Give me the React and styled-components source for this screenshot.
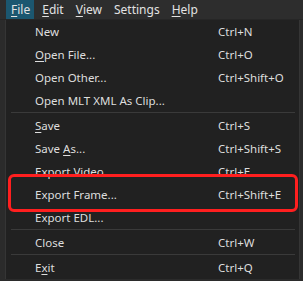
import React from 'react'
import styled, { createGlobalStyle } from 'styled-components'

const GlobalStyle = createGlobalStyle`
  html, body {
    margin: 0;
    padding: 0;
    background: #2b2b2b;
    overflow: hidden;
  }
  body {
    font-family: "Noto Sans", "Open Sans", sans-serif;
    font-size: 11.5px;
    color: #dedede;
  }
`

const Window = styled.div`
  width: 303px;
  height: 281px;
  background: #2b2b2b;
  overflow: hidden;
`

const MenuBar = styled.div`
  display: flex;
  gap: 3px;
  height: 20px;
  padding-left: 6px;
  background: #2d2d2d;
  border-bottom: 1px solid #262626;
  box-sizing: border-box;
  font-size: 12px;
`

const BarItem = styled.div`
  display: flex;
  align-items: center;
  padding: 0 4px 0 5px;
  background: ${(p) => (p.$active ? '#1b5770' : 'transparent')};
  color: #e2e2e2;
`

const Mnemonic = styled.span`
  text-decoration: underline;
  text-underline-offset: 2px;
`

const Dropdown = styled.div`
  margin-left: 5px;
  width: 295px;
  background: #212121;
  border-left: 1px solid #353535;
  border-right: 1px solid #353535;
  box-sizing: border-box;
`

const Row = styled.div`
  position: relative;
  display: grid;
  grid-template-columns: 183px 1fr;
  align-items: center;
  height: 23px;
  padding-left: 29px;
`

const Shortcut = styled.span`
  white-space: nowrap;
`

const Separator = styled.div`
  height: 1px;
  margin: 0 4px 1px 5px;
  background: #3a3a3a;
`

const Highlight = styled.div`
  position: absolute;
  top: -9px;
  bottom: -6px;
  left: 2px;
  right: 1px;
  border: 3px solid #ff1f1f;
  border-radius: 6px;
  pointer-events: none;
`

const label = (text, key) => {
  if (key == null) return text
  return (
    <>
      {text.slice(0, key)}
      <Mnemonic>{text[key]}</Mnemonic>
      {text.slice(key + 1)}
    </>
  )
}

const items = [
  { text: 'New', shortcut: 'Ctrl+N' },
  { text: 'Open File...', key: 0, shortcut: 'Ctrl+O' },
  { text: 'Open Other...', shortcut: 'Ctrl+Shift+O' },
  { text: 'Open MLT XML As Clip...' },
  'sep',
  { text: 'Save', key: 0, shortcut: 'Ctrl+S' },
  { text: 'Save As...', key: 5, shortcut: 'Ctrl+Shift+S' },
  { text: 'Export Video...', shortcut: 'Ctrl+E' },
  { text: 'Export Frame...', shortcut: 'Ctrl+Shift+E', marked: true },
  { text: 'Export EDL...' },
  'sep',
  { text: 'Close', shortcut: 'Ctrl+W' },
  'sep',
  { text: 'Exit', key: 1, shortcut: 'Ctrl+Q' },
]

const App = () => (
  <Window>
    <GlobalStyle />
    <MenuBar>
      <BarItem $active>{label('File', 0)}</BarItem>
      <BarItem>{label('Edit', 0)}</BarItem>
      <BarItem>{label('View', 0)}</BarItem>
      <BarItem>Settings</BarItem>
      <BarItem>{label('Help', 0)}</BarItem>
    </MenuBar>
    <Dropdown>
      {items.map((item, i) =>
        item === 'sep' ? (
          <Separator key={i} />
        ) : (
          <Row key={i}>
            <span>{label(item.text, item.key)}</span>
            <Shortcut>{item.shortcut}</Shortcut>
            {item.marked ? <Highlight /> : null}
          </Row>
        )
      )}
    </Dropdown>
  </Window>
)

export default App
